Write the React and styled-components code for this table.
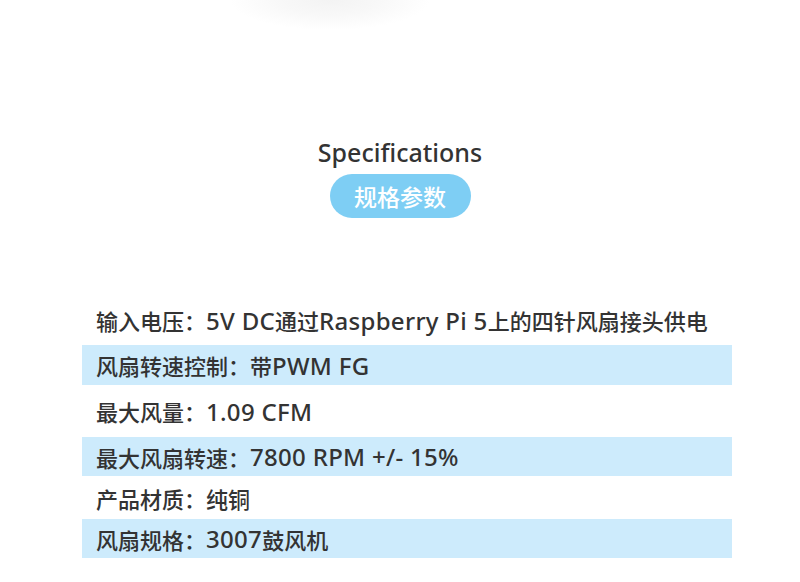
import React from "react";
import styled, { createGlobalStyle } from "styled-components";

const GlobalStyle = createGlobalStyle`
  body {
    margin: 0;
    background: #ffffff;
    font-family: "Noto Sans", "Noto Sans CJK SC", sans-serif;
    color: #333333;
  }
`;

const Page = styled.div`
  width: 800px;
  height: 582px;
  overflow: hidden;
  background: #ffffff;
`;

const Glow = styled.div`
  height: 136px;
  background: radial-gradient(
    ellipse 100px 30px at 330px 0px,
    #f3f3f3 0%,
    #f8f8f8 50%,
    rgba(255, 255, 255, 0) 100%
  );
`;

const Heading = styled.div`
  display: flex;
  flex-direction: column;
  align-items: center;
`;

const Title = styled.h2`
  margin: 0;
  font-size: 25px;
  font-weight: 500;
  line-height: 32px;
  color: #333333;
`;

const Pill = styled.div`
  margin-top: 6px;
  width: 141px;
  height: 44px;
  border-radius: 22px;
  background: #7ecef4;
  color: #ffffff;
  font-size: 23px;
  font-weight: 500;
  display: flex;
  align-items: center;
  justify-content: center;
`;

const SpecList = styled.ul`
  list-style: none;
  margin: 77px 0 0 82px;
  padding: 0;
  width: 650px;
`;

const SpecRow = styled.li`
  height: ${(p) => p.$h}px;
  background: ${(p) => (p.$striped ? "#cdebfc" : "transparent")};
  display: flex;
  align-items: center;
  padding-left: 14px;
  font-size: 22px;
  font-weight: 500;
  color: #333333;
  white-space: pre;
`;

// latin runs are set a little larger, the original uses a wider face
const Latin = styled.span`
  font-size: 24px;
  letter-spacing: 0.3px;
`;

const specs = [
  { text: "输入电压：5V DC通过Raspberry Pi 5上的四针风扇接头供电", h: 50 },
  { text: "风扇转速控制：带PWM FG", h: 40, striped: true },
  { text: "最大风量：1.09 CFM", h: 52 },
  { text: "最大风扇转速：7800 RPM +/- 15%", h: 39, striped: true },
  { text: "产品材质：纯铜", h: 43 },
  { text: "风扇规格：3007鼓风机", h: 39, striped: true },
];

const renderText = (text) =>
  text
    .split(/([\x20-\x7E]+)/)
    .filter(Boolean)
    .map((part, i) =>
      /^[\x20-\x7E]+$/.test(part) ? <Latin key={i}>{part}</Latin> : part
    );

const App = () => {
  return (
    <Page>
      <GlobalStyle />
      <Glow />
      <Heading>
        <Title>Specifications</Title>
        <Pill>规格参数</Pill>
      </Heading>
      <SpecList>
        {specs.map((s, i) => (
          <SpecRow key={i} $h={s.h} $striped={s.striped}>
            {renderText(s.text)}
          </SpecRow>
        ))}
      </SpecList>
    </Page>
  );
};

export default App;
